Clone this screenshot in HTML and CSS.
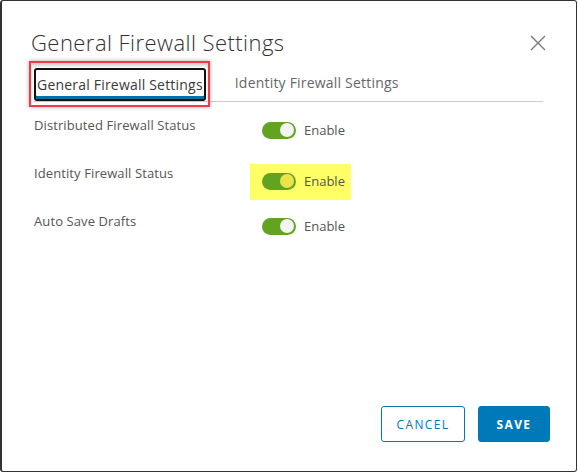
FILE: index.html
```html
<!DOCTYPE html>
<html>
<head>
<meta charset="utf-8">
<link rel="stylesheet" href="styles.css">
</head>
<body>
<div class="dialog">
  <div class="header">
    <h1 class="title">General Firewall Settings</h1>
    <button class="close" aria-label="Close">
      <svg width="16" height="16" viewBox="0 0 16 16"><path d="M1 1L15 15M15 1L1 15" stroke="#7a7a7a" stroke-width="1.4" fill="none"/></svg>
    </button>
  </div>
  <div class="tabs">
    <div class="tab active"><span class="tab-label">General Firewall Settings</span><span class="annot"></span></div>
    <div class="tab">Identity Firewall Settings</div>
  </div>
  <div class="rows">
    <div class="row">
      <div class="label">Distributed Firewall Status</div>
      <div class="control"><span class="toggle"><span class="knob"></span></span><span class="enable">Enable</span></div>
    </div>
    <div class="row">
      <div class="label">Identity Firewall Status</div>
      <div class="control hl"><span class="toggle"><span class="knob yellow"></span></span><span class="enable">Enable</span></div>
    </div>
    <div class="row">
      <div class="label">Auto Save Drafts</div>
      <div class="control"><span class="toggle"><span class="knob"></span></span><span class="enable">Enable</span></div>
    </div>
  </div>
  <div class="footer">
    <button class="btn btn-outline">CANCEL</button>
    <button class="btn btn-primary">SAVE</button>
  </div>
</div>
</body>
</html>
```
FILE: styles.css
```css
html, body { margin: 0; padding: 0; background: #fff; }
body { font-family: "Open Sans", "Liberation Sans", sans-serif; }
.dialog {
  width: 577px; height: 472px; box-sizing: border-box;
  border: 1px solid #333; border-left-width: 2px;
  border-radius: 3px;
  display: flex; flex-direction: column;
  background: #fff;
}
.header { display: flex; align-items: flex-start; justify-content: space-between; padding: 27px 30px 0 29px; }
.title { margin: 0; font-weight: 300; font-size: 22px; letter-spacing: 0.45px; line-height: 28px; color: #313131; }
.close { border: 0; background: none; padding: 0; margin-top: 7px; width: 16px; height: 16px; }
.close svg { display: block; }
.tabs { display: flex; align-items: flex-end; margin: 9px 33px 0 32px; border-bottom: 1px solid #ccc; height: 36px; gap: 29px; }
.tab { position: relative; font-size: 14px; letter-spacing: 0.2px; color: #666; line-height: 18px; padding: 0 0 9px 0; }
.tab.active { color: #3a3a3a; border: 2px solid #111; border-radius: 3px; padding: 6px 1px 5px 1px; box-shadow: inset 0 -3px 0 #0072a3; }
.annot { position: absolute; left: -7px; top: -9px; right: -6px; bottom: -8px; border: 2px solid #ee3b45; box-shadow: 0 0 4px rgba(0,0,0,0.35), inset 0 3px 3px rgba(0,0,0,0.18); }
.rows { margin: 14px 0 0 32px; display: flex; flex-direction: column; gap: 24px; }
.row { display: flex; height: 24px; }
.label { width: 228px; font-size: 13px; letter-spacing: 0.1px; color: #555; line-height: 18px; }
.control { display: flex; align-items: center; height: 34px; align-self: flex-start; margin-top: -3px; padding: 0 4px 0 0; }
.control.hl { background: #ffff66; margin-left: -12px; padding: 0 6px 2px 12px; height: 34px; margin-top: 0; }
.toggle { width: 34px; height: 17px; border-radius: 9px; background: #62a420; position: relative; display: inline-block; }
.knob { position: absolute; right: 2px; top: 1.5px; width: 14px; height: 14px; border-radius: 50%; background: #f4f4f4; }
.knob.yellow { background: #e8e44a; }
.enable { margin-left: 8px; font-size: 13px; color: #555; }
.footer { margin-top: auto; display: flex; justify-content: flex-end; gap: 13px; padding: 0 26px 29px 0; }
.btn { height: 36px; box-sizing: border-box; border-radius: 3px; font-family: inherit; font-size: 12px; letter-spacing: 1.4px; padding: 0; }
.btn-outline { width: 84px; border: 1px solid #0079b8; background: #fff; color: #0079b8; font-weight: 400; }
.btn-primary { width: 72px; border: 1px solid #0079b8; background: #0079b8; color: #fff; font-weight: 700; }
```
